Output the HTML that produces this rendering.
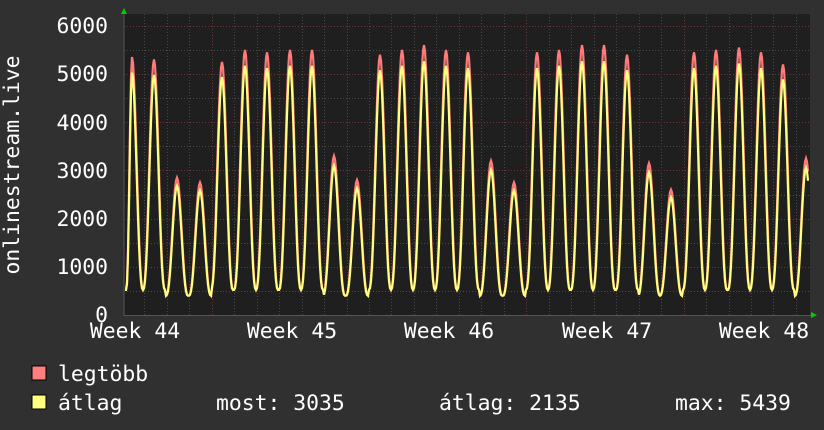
<!DOCTYPE html>
<html><head><meta charset="utf-8"><style>
html,body{margin:0;padding:0;background:#303030;}
svg{display:block}
text{font-family:"DejaVu Sans Mono","Liberation Mono",monospace;fill:#fff;}
</style></head><body>
<svg id="g" width="824" height="430" xmlns="http://www.w3.org/2000/svg">
<rect width="824" height="430" fill="#303030"/>
<rect x="124" y="14" width="686" height="302" fill="#1f1f1f"/>
<g id="grid"></g>
<path id="mx" fill="none" stroke="#ff7a7a" stroke-width="2.2"/>
<path id="av" fill="none" stroke="#ffff80" stroke-width="2.2"/>
<line x1="124" y1="12" x2="124" y2="316" stroke="#555" stroke-width="1"/>
<line x1="124" y1="315.5" x2="812" y2="315.5" stroke="#555" stroke-width="1"/>
<polygon points="121,14 127,14 124,8" fill="#00d000"/>
<polygon points="811,312 811,318 817,315" fill="#00d000"/>
<g font-size="21.4" text-anchor="end">
<text x="108" y="33">6000</text>
<text x="108" y="81">5000</text>
<text x="108" y="130">4000</text>
<text x="108" y="178">3000</text>
<text x="108" y="226">2000</text>
<text x="108" y="274">1000</text>
<text x="108" y="322">0</text>
</g>
<g font-size="21.4" text-anchor="middle">
<text x="135" y="338">Week 44</text>
<text x="292" y="338">Week 45</text>
<text x="449" y="338">Week 46</text>
<text x="607" y="338">Week 47</text>
<text x="764" y="338">Week 48</text>
</g>
<text font-size="21.4" transform="translate(19,165) rotate(-90)" text-anchor="middle">onlinestream.live</text>
<rect x="32" y="366" width="14" height="14" fill="#ff7f7f" stroke="#000" stroke-width="1"/>
<rect x="32" y="395" width="14" height="14" fill="#ffff80" stroke="#000" stroke-width="1"/>
<g font-size="21.4">
<text x="58" y="381">legtöbb</text>
<text x="58" y="410">átlag</text>
<text x="216" y="410">most: 3035</text>
<text x="439" y="410">átlag: 2135</text>
<text x="675" y="410">max: 5439</text>
</g>
</svg>
<script>
var ns="http://www.w3.org/2000/svg",g=document.getElementById('grid');
function ln(x1,y1,x2,y2,c){var l=document.createElementNS(ns,'line');l.setAttribute('x1',x1);l.setAttribute('y1',y1);l.setAttribute('x2',x2);l.setAttribute('y2',y2);l.setAttribute('stroke',c);l.setAttribute('stroke-width',1);l.setAttribute('stroke-dasharray','1,2');g.appendChild(l);}
function Y(v){return 315-v*0.0482;}
for(var v=500;v<=6000;v+=500){var y=Math.round(Y(v))+.5;ln(124,y,810,y,v%1000==0?'#6a3a3a':'#4a4a4a');}
for(var k=0;k<31;k++){var x=Math.round(144.3+22.47*k)+.5;if(x>810)break;var maj=((k-3)%7==0);ln(x,14,x,316,maj?'#6a3a3a':'#4a4a4a');}
var px=[132,154,177,200,222,245,267,290,312,334,357,380,402,424,446,468,491,514,537,559,582,604,627,649,671,694,716,739,761,783,806];
var pv=[5350,5300,2850,2750,5250,5500,5450,5500,5500,3300,2800,5400,5500,5600,5500,5450,3200,2750,5450,5500,5600,5600,5400,3150,2600,5450,5500,5550,5450,5200,3250];
function val(x,avg){var bi=0;for(var i=0;i<px.length;i++){if(Math.abs(x-px[i])<Math.abs(x-px[bi]))bi=i;}
var d=x-px[bi],p=pv[bi],base=(p<3500?400:520);
var w=(bi==0&&d<0)?6:11.2;
var ph=Math.max(-1,Math.min(1,d/w));var c=(1+Math.cos(Math.PI*ph))/2;
if(avg){return base+(p*0.94-base)*Math.pow(c,1.35);}
return base+(p-base)*Math.pow(c,1.25);}
function path(avg){var d='';for(var x=125;x<=808;x+=1){var v=val(x,avg);d+=(x==125?'M':'L')+x+','+Y(v).toFixed(1);}return d;}
document.getElementById('mx').setAttribute('d',path(false));
document.getElementById('av').setAttribute('d',path(true));
</script>
</body></html>
